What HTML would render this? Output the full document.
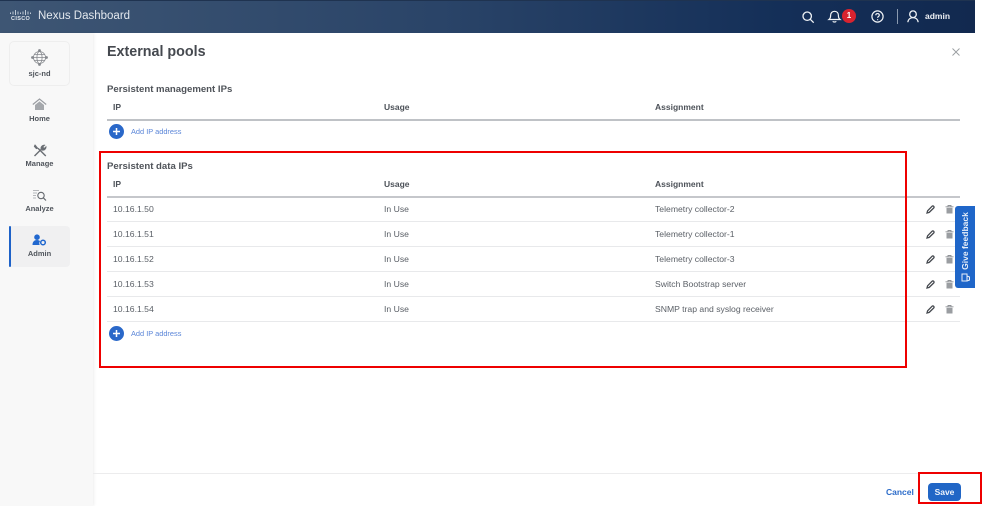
<!DOCTYPE html>
<html><head><meta charset="utf-8">
<style>
html,body{margin:0;padding:0;background:#fff}
body{width:982px;height:506px;position:relative;overflow:hidden;font-family:"Liberation Sans",sans-serif;color:#50555c}
#w{position:absolute;left:0;top:0;width:982px;height:506px;overflow:hidden;filter:blur(.3px)}
.a{position:absolute;white-space:nowrap}
.t{font-size:8.65px;line-height:10px;color:#5a5f66}
.h{font-size:8.5px;line-height:10px;font-weight:bold;color:#4c5158}
.sec{font-size:9.6px;line-height:12px;font-weight:bold;color:#4f5359}
.line{position:absolute;left:107px;width:853px;height:1px;background:#e8e9eb}
.navl{position:absolute;left:9px;width:61px;text-align:center;font-size:7.5px;line-height:9px;font-weight:bold;color:#50555c}
.add{font-size:7.4px;line-height:9px;color:#5b86d8}
svg{position:absolute;overflow:visible}
</style></head><body><div id="w">
<div class="a" style="left:0;top:0;width:975px;height:33px;background:linear-gradient(90deg,#3e5674 0%,#2a4468 45%,#142f58 80%,#12294f 100%);border-top:1px solid #1f3350;box-sizing:border-box"></div>
<svg style="left:10px;top:10px" width="21" height="6" fill="none" stroke="#dfe6ee" stroke-width=".8"><path d="M.5 2.500v1.500M3 1.500v3M5.500 0v5M8 1.500v3M10.500 2.500v1.500M13 1.500v3M15.500 0v5M18 1.500v3M20.500 2.500v1.500"/></svg>
<div class="a" style="left:11px;top:16px;font-size:5.500px;line-height:6px;font-weight:bold;color:#e4e9ef;letter-spacing:.35px">CISCO</div>
<div class="a" style="left:38px;top:9px;font-size:11.500px;line-height:14px;color:#e3e8ee">Nexus Dashboard</div>
<svg style="left:802px;top:11px" width="12" height="12" fill="none" stroke="#f0f3f6" stroke-width="1.300"><circle cx="5.200" cy="5.200" r="4.200"/><path d="M8.300 8.300l3.400 3.400"/></svg>
<svg style="left:828px;top:10px" width="13" height="13" fill="none" stroke="#f0f3f6" stroke-width="1.200"><path d="M1 9.500c1.300-1 1.600-2 1.600-4 0-2.600 1.600-4.200 3.900-4.200s3.900 1.600 3.900 4.200c0 2 .3 3 1.600 4z"/><path d="M4.800 11.200c.5 1.100 2.900 1.100 3.400 0"/></svg>
<div class="a" style="left:842px;top:9px;width:14px;height:14px;border-radius:50%;background:#d8232f;color:#fff;font-size:8px;line-height:14px;text-align:center;font-weight:bold">1</div>
<svg style="left:871px;top:10px" width="13" height="13" fill="none" stroke="#f0f3f6" stroke-width="1.200"><circle cx="6.500" cy="6.500" r="5.600"/><path d="M4.800 5.200c0-2.200 3.500-2.200 3.500 0 0 1.300-1.700 1.300-1.700 2.600"/><path d="M6.600 9.200v1"/></svg>
<div class="a" style="left:897px;top:9px;width:1px;height:15px;background:#8a9ab0"></div>
<svg style="left:907px;top:10px" width="12" height="13" fill="none" stroke="#f0f3f6" stroke-width="1.300"><circle cx="6" cy="4.200" r="3.300"/><path d="M.8 12.200c.4-2.800 2.400-4.600 5.200-4.600s4.800 1.800 5.200 4.600"/></svg>
<div class="a" style="left:925px;top:11px;font-size:8.500px;line-height:10px;font-weight:bold;color:#eef1f5">admin</div>

<div class="a" style="left:0;top:33px;width:93px;height:473px;background:#f8f8f8;box-shadow:1px 0 3px rgba(0,0,0,.07)"></div>
<div class="a" style="left:9px;top:41px;width:61px;height:45px;box-sizing:border-box;background:#f8f8f8;border:1px solid #eeeeee;border-radius:5px"></div>
<svg style="left:31px;top:49px" width="17" height="17" fill="none" stroke="#85888d" stroke-width=".8"><circle cx="8.500" cy="8.500" r="6"/><ellipse cx="8.500" cy="8.500" rx="2.600" ry="6"/><path d="M2.500 8.500h12M3.500 5.500h10M3.500 11.500h10"/><g fill="#85888d" stroke="none"><circle cx="8.500" cy="1.500" r="1.400"/><circle cx="8.500" cy="15.500" r="1.400"/><circle cx="1.500" cy="8.500" r="1.400"/><circle cx="15.500" cy="8.500" r="1.400"/></g></svg>
<div class="navl" style="top:69px">sjc-nd</div>
<svg style="left:32px;top:98px" width="15" height="13"><path d="M.8 6.500L7.500 1l6.700 5.500" fill="none" stroke="#9a9da2" stroke-width="1.200"/><path d="M3 7l4.500-3.600L12 7v5H3z" fill="#a5a8ac"/></svg>
<div class="navl" style="top:114px">Home</div>
<svg style="left:33px;top:143px" width="14" height="14" fill="none" stroke="#6a6e74" stroke-width="1.400"><path d="M1.500 13L8 6.500"/><path d="M12.800 13L5 5.200"/><path d="M2 1.500L5 5.200 3.300 6 1 3.500z" fill="#6a6e74" stroke-width=".5"/><path d="M8 6.500c-1-2.500 1-5 4.200-4.500L10.200 4l1 1 2-1.800c.5 3-2 5-4.700 4" fill="#6a6e74" stroke-width=".4"/></svg>
<div class="navl" style="top:159px">Manage</div>
<svg style="left:32px;top:189px" width="15" height="13" fill="none"><path d="M1 1.500h6M1 4h4M1 6.500h3M1 9h3" stroke="#b5b7bb" stroke-width=".9"/><circle cx="9" cy="6.500" r="3.200" stroke="#64686e" stroke-width="1.100"/><path d="M11.300 8.800l2.700 2.700" stroke="#64686e" stroke-width="1.200"/></svg>
<div class="navl" style="top:204px">Analyze</div>
<div class="a" style="left:9px;top:226px;width:61px;height:41px;background:#f0f0f1;border-radius:4px"></div>
<div class="a" style="left:9px;top:226px;width:2px;height:41px;background:#1e62c8;border-radius:2px"></div>
<svg style="left:32px;top:234px" width="15" height="13"><circle cx="5" cy="3.200" r="2.800" fill="#2168cf"/><path d="M.5 11c0-3.500 2-5 4.500-5 1.500 0 2.500.5 3 1.200-.8.800-1 2.500-.3 3.800z" fill="#2168cf"/><circle cx="11" cy="8.500" r="2.300" fill="none" stroke="#2168cf" stroke-width="1.500"/></svg>
<div class="navl" style="top:249px">Admin</div>

<div class="a" style="left:107px;top:43px;font-size:14.300px;line-height:18px;font-weight:bold;color:#45494f">External pools</div>
<svg style="left:952px;top:48px" width="8" height="8" fill="none" stroke="#9a9da1" stroke-width=".9"><path d="M.5.500l7 7M7.500.500l-7 7"/></svg>

<div class="a sec" style="left:107px;top:84px">Persistent management IPs</div>
<div class="a h" style="left:113px;top:102px">IP</div><div class="a h" style="left:384px;top:102px">Usage</div><div class="a h" style="left:655px;top:102px">Assignment</div>
<div class="line" style="top:119px;height:2px;background:#bfc2c6"></div>
<div class="a" style="left:109px;top:124px;width:15px;height:15px;border-radius:50%;background:#2a68c9"></div>
<svg style="left:113px;top:128px" width="7" height="7" stroke="#fff" stroke-width="1.500"><path d="M3.500 0v7M0 3.500h7"/></svg>
<div class="a add" style="left:131px;top:127px">Add IP address</div>

<div class="a sec" style="left:107px;top:161px">Persistent data IPs</div>
<div class="a h" style="left:113px;top:179px">IP</div><div class="a h" style="left:384px;top:179px">Usage</div><div class="a h" style="left:655px;top:179px">Assignment</div>
<div class="line" style="top:196px;height:2px;background:#c5c7cb"></div>

<div class="a t" style="left:113px;top:204px">10.16.1.50</div><div class="a t" style="left:384px;top:204px">In Use</div><div class="a t" style="left:655px;top:204px">Telemetry collector-2</div>
<div class="line" style="top:221px"></div>
<div class="a t" style="left:113px;top:229px">10.16.1.51</div><div class="a t" style="left:384px;top:229px">In Use</div><div class="a t" style="left:655px;top:229px">Telemetry collector-1</div>
<div class="line" style="top:246px"></div>
<div class="a t" style="left:113px;top:254px">10.16.1.52</div><div class="a t" style="left:384px;top:254px">In Use</div><div class="a t" style="left:655px;top:254px">Telemetry collector-3</div>
<div class="line" style="top:271px"></div>
<div class="a t" style="left:113px;top:279px">10.16.1.53</div><div class="a t" style="left:384px;top:279px">In Use</div><div class="a t" style="left:655px;top:279px">Switch Bootstrap server</div>
<div class="line" style="top:296px"></div>
<div class="a t" style="left:113px;top:304px">10.16.1.54</div><div class="a t" style="left:384px;top:304px">In Use</div><div class="a t" style="left:655px;top:304px">SNMP trap and syslog receiver</div>
<div class="line" style="top:321px"></div>

<svg width="0" height="0" style="left:0;top:0"><defs>
<g id="pen"><path d="M1 8l.6-2.200L6 1.300c.5-.5 1.200-.5 1.700 0s.5 1.200 0 1.700L3.200 7.400z" fill="none" stroke="#45494f" stroke-width="1.300"/></g>
<g id="bin"><path d="M.5 1.800h8M3 1.500V.500h3v1" fill="none" stroke="#8f9296" stroke-width=".9"/><path d="M1.500 2.800h6V8.500h-6z" fill="#9a9da1"/></g>
</defs></svg>
<svg style="left:926px;top:205px" width="9" height="9"><use href="#pen"/></svg><svg style="left:945px;top:205px" width="9" height="9"><use href="#bin"/></svg>
<svg style="left:926px;top:230px" width="9" height="9"><use href="#pen"/></svg><svg style="left:945px;top:230px" width="9" height="9"><use href="#bin"/></svg>
<svg style="left:926px;top:255px" width="9" height="9"><use href="#pen"/></svg><svg style="left:945px;top:255px" width="9" height="9"><use href="#bin"/></svg>
<svg style="left:926px;top:280px" width="9" height="9"><use href="#pen"/></svg><svg style="left:945px;top:280px" width="9" height="9"><use href="#bin"/></svg>
<svg style="left:926px;top:305px" width="9" height="9"><use href="#pen"/></svg><svg style="left:945px;top:305px" width="9" height="9"><use href="#bin"/></svg>

<div class="a" style="left:109px;top:326px;width:15px;height:15px;border-radius:50%;background:#2a68c9"></div>
<svg style="left:113px;top:330px" width="7" height="7" stroke="#fff" stroke-width="1.500"><path d="M3.500 0v7M0 3.500h7"/></svg>
<div class="a add" style="left:131px;top:329px">Add IP address</div>

<div class="a" style="left:955px;top:206px;width:20px;height:82px;background:#1f66c9;border-radius:3px 0 0 3px"></div>
<div class="a" style="left:955px;top:206px;width:20px;height:82px"><div style="position:absolute;left:10px;top:35px;transform:translate(-50%,-50%) rotate(-90deg);font-size:8.500px;line-height:10px;font-weight:bold;color:#e8eff9;white-space:nowrap">Give feedback</div></div>
<svg style="left:961px;top:273px" width="9" height="9" fill="none" stroke="#e8eff9" stroke-width="1"><path d="M1 1h5v7H1zM6 3l2.500 1v3L6 8"/></svg>

<div class="a" style="left:99px;top:151px;width:808px;height:217px;box-sizing:border-box;border:2px solid #ee0000"></div>

<div class="a" style="left:93px;top:473px;width:889px;height:1px;background:#ececed"></div>
<div class="a" style="left:886px;top:487px;font-size:8.500px;line-height:10px;font-weight:bold;color:#2b6bc9">Cancel</div>
<div class="a" style="left:928px;top:483px;width:33px;height:18px;background:#2166c6;border-radius:4px;color:#eef3fb;font-size:8.500px;line-height:18px;font-weight:bold;text-align:center">Save</div>
<div class="a" style="left:918px;top:472px;width:64px;height:32px;box-sizing:border-box;border:2px solid #ee0000"></div>
</div></body></html>
